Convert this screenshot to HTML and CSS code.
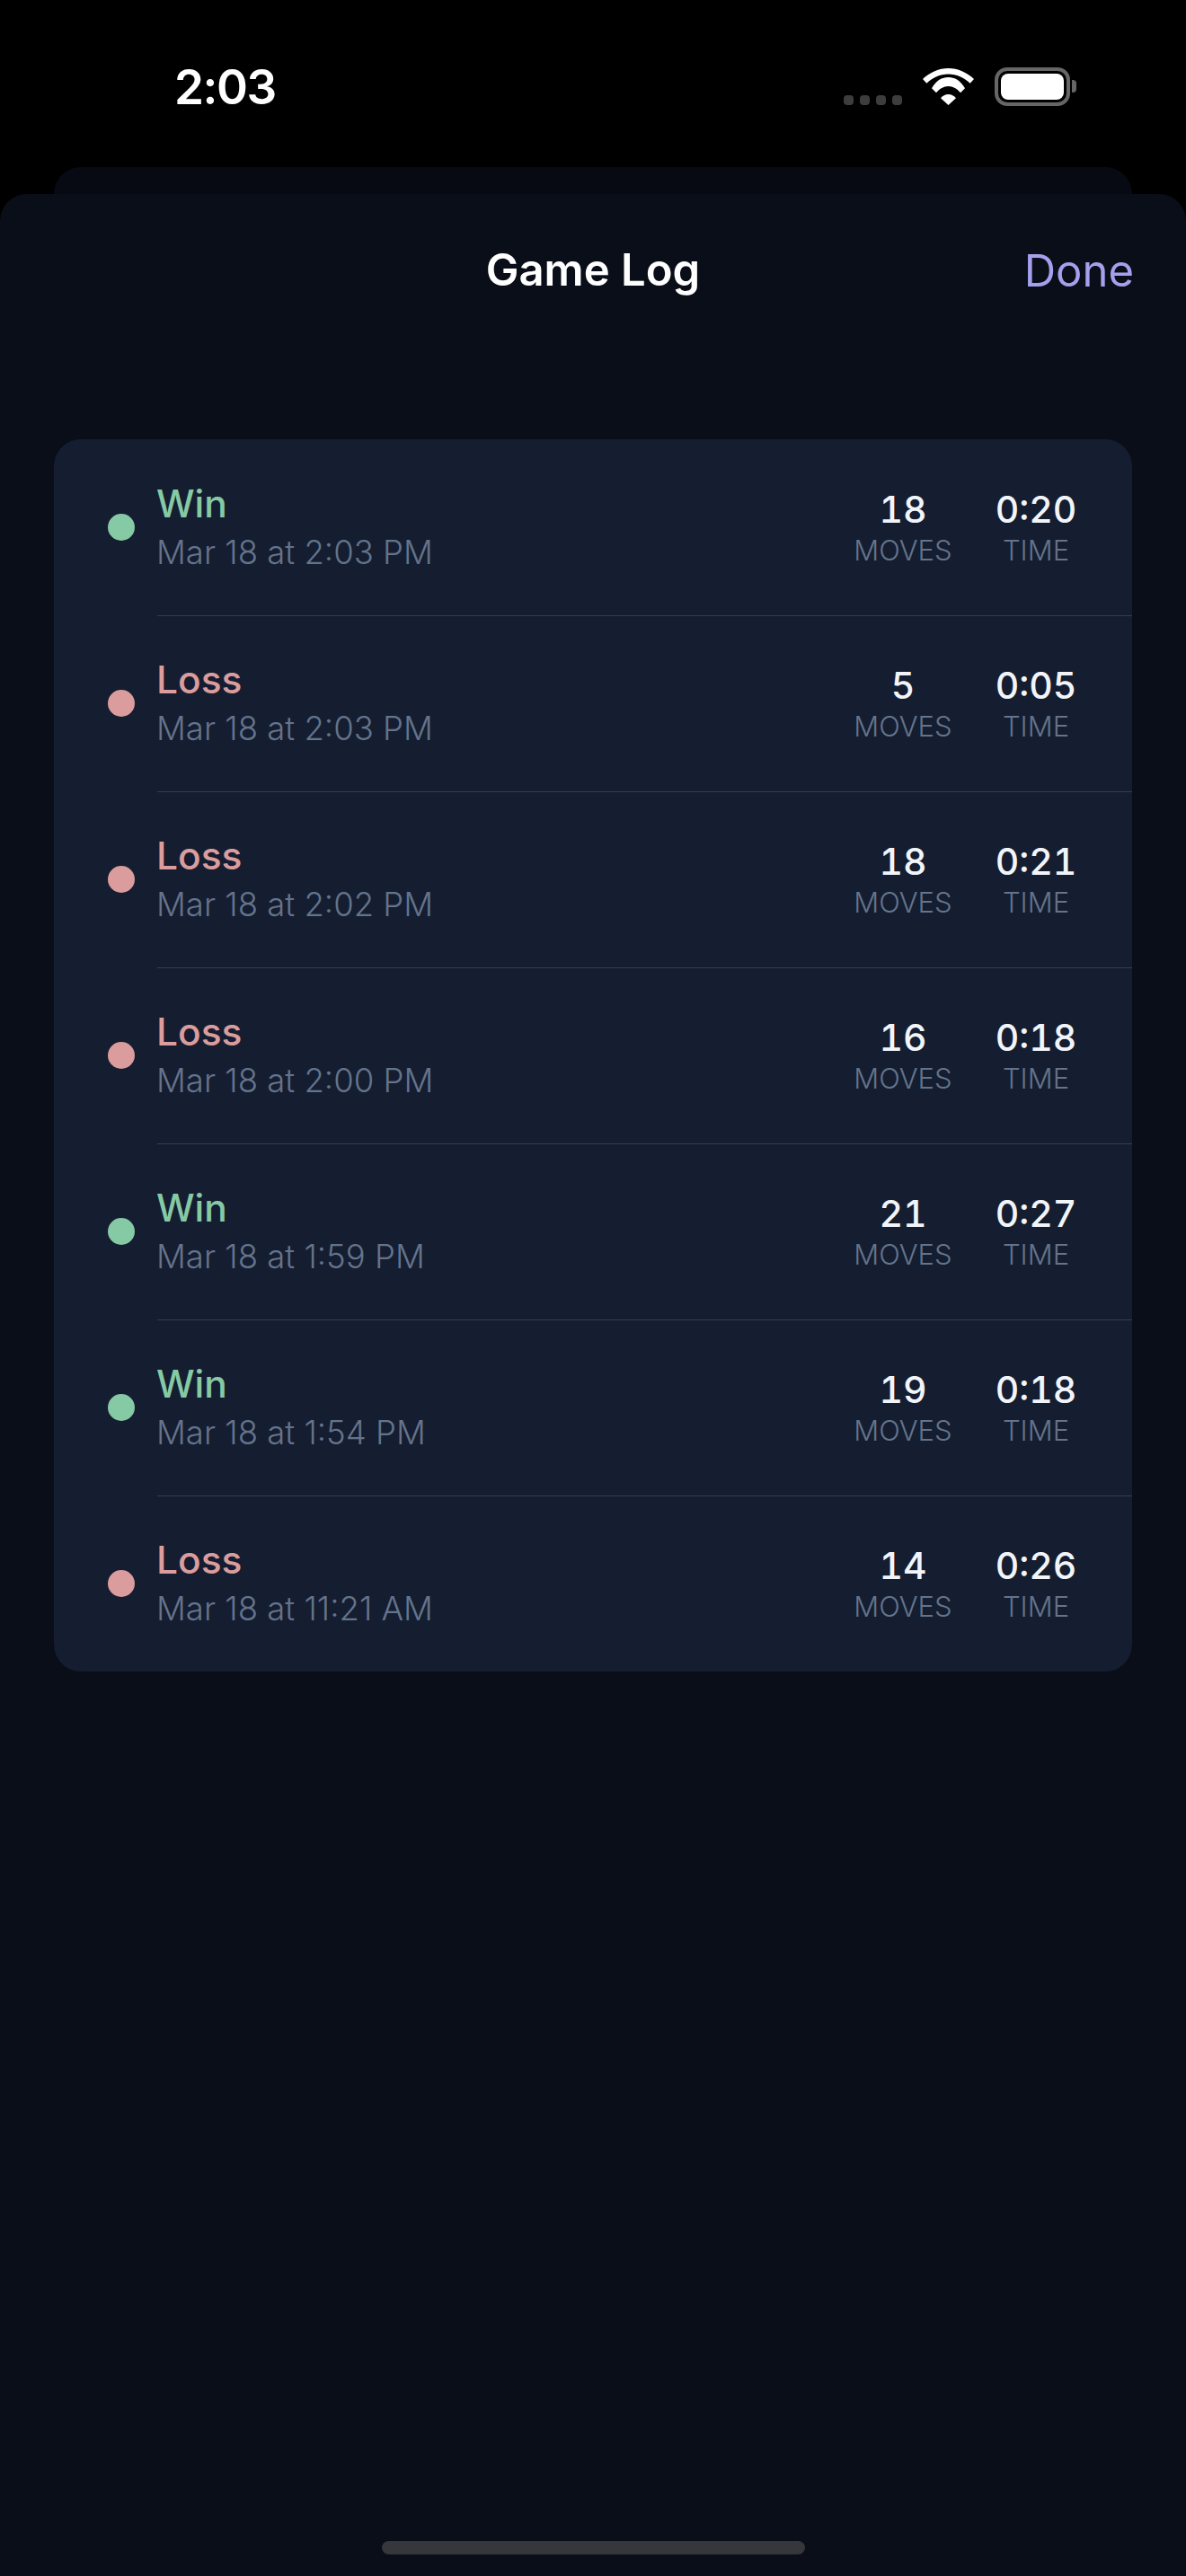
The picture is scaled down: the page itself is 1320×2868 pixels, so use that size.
FILE: index.html
```html
<!DOCTYPE html>
<html lang="en">
<head>
    <meta charset="UTF-8">
    <meta name="viewport" content="width=device-width, initial-scale=1.0">
    <title>Game Log</title>
    <link rel="stylesheet" href="styles.css">
</head>
<body>
    <div class="status-bar">
        <span class="clock">2:03</span>
        <div class="status-icons">
            <div class="signal"><span></span><span></span><span></span><span></span></div>
            <svg class="wifi" width="57" height="41" viewBox="0 0 57 41" fill="#fff">
                <path d="M0 12C8 4.500 18 0 28.500 0S49 4.500 57 12L52.700 16.700C46 10.300 37.700 6.500 28.500 6.500S11 10.300 4.300 16.700Z"></path>
                <path d="M10 22.300C15 13.500 21.500 10 28.500 10S42 13.500 47 22.300L42 27.300C38.300 23 33.700 20 28.500 20S18.700 23 15 27.300Z"></path>
                <path d="M20 33.300C22 30.700 25 29 28.500 29S35 30.700 37 33.300L28.500 41Z"></path>
            </svg>
            <div class="battery"><div class="battery-level"></div></div>
            <div class="battery-tip"></div>
        </div>
    </div>
    <div class="back-sheet"></div>
    <div class="sheet">
        <div class="sheet-header">
            <h1>Game Log</h1>
            <button class="done-btn">Done</button>
        </div>
        <div class="log-list">
            <div class="log-row">
                <span class="dot dot-win"></span>
                <div class="log-main"><div class="result result-win">Win</div><div class="when">Mar 18 at 2:03 PM</div></div>
                <div class="stat stat-moves"><div class="stat-value">18</div><div class="stat-label">MOVES</div></div>
                <div class="stat stat-time"><div class="stat-value">0:20</div><div class="stat-label">TIME</div></div>
            </div>
            <div class="log-row">
                <span class="dot dot-loss"></span>
                <div class="log-main"><div class="result result-loss">Loss</div><div class="when">Mar 18 at 2:03 PM</div></div>
                <div class="stat stat-moves"><div class="stat-value">5</div><div class="stat-label">MOVES</div></div>
                <div class="stat stat-time"><div class="stat-value">0:05</div><div class="stat-label">TIME</div></div>
            </div>
            <div class="log-row">
                <span class="dot dot-loss"></span>
                <div class="log-main"><div class="result result-loss">Loss</div><div class="when">Mar 18 at 2:02 PM</div></div>
                <div class="stat stat-moves"><div class="stat-value">18</div><div class="stat-label">MOVES</div></div>
                <div class="stat stat-time"><div class="stat-value">0:21</div><div class="stat-label">TIME</div></div>
            </div>
            <div class="log-row">
                <span class="dot dot-loss"></span>
                <div class="log-main"><div class="result result-loss">Loss</div><div class="when">Mar 18 at 2:00 PM</div></div>
                <div class="stat stat-moves"><div class="stat-value">16</div><div class="stat-label">MOVES</div></div>
                <div class="stat stat-time"><div class="stat-value">0:18</div><div class="stat-label">TIME</div></div>
            </div>
            <div class="log-row">
                <span class="dot dot-win"></span>
                <div class="log-main"><div class="result result-win">Win</div><div class="when">Mar 18 at 1:59 PM</div></div>
                <div class="stat stat-moves"><div class="stat-value">21</div><div class="stat-label">MOVES</div></div>
                <div class="stat stat-time"><div class="stat-value">0:27</div><div class="stat-label">TIME</div></div>
            </div>
            <div class="log-row">
                <span class="dot dot-win"></span>
                <div class="log-main"><div class="result result-win">Win</div><div class="when">Mar 18 at 1:54 PM</div></div>
                <div class="stat stat-moves"><div class="stat-value">19</div><div class="stat-label">MOVES</div></div>
                <div class="stat stat-time"><div class="stat-value">0:18</div><div class="stat-label">TIME</div></div>
            </div>
            <div class="log-row">
                <span class="dot dot-loss"></span>
                <div class="log-main"><div class="result result-loss">Loss</div><div class="when">Mar 18 at 11:21 AM</div></div>
                <div class="stat stat-moves"><div class="stat-value">14</div><div class="stat-label">MOVES</div></div>
                <div class="stat stat-time"><div class="stat-value">0:26</div><div class="stat-label">TIME</div></div>
            </div>
        </div>
        <div class="home-indicator"></div>
    </div>
</body>
</html>
```

FILE: styles.css
```css
:root {
    --sheet-color: #0a0e18;
    --back-color: #070a12;
    --card-color: #151d31;
    --line-color: #373d49;
    --win-color: #86c9a5;
    --loss-color: #da9c9d;
    --muted-color: #64748b;
    --value-color: #f1f5f9;
    --accent-color: #a5a0ee;
}
html, body {
    margin: 0;
    padding: 0;
}
body {
    width: 1320px;
    height: 2868px;
    overflow: hidden;
    background-color: #000;
    font-family: Inter, 'Liberation Sans', sans-serif;
    display: flex;
    flex-direction: column;
}
.status-bar {
    height: 186px;
    flex: none;
    padding: 0 122px 0 194px;
    box-sizing: border-box;
    display: flex;
    justify-content: space-between;
    align-items: flex-start;
}
.clock {
    margin-top: 64px;
    color: #fff;
    font-size: 53px;
    line-height: 66px;
    font-weight: 600;
    letter-spacing: -1.5px;
}
.status-icons {
    margin-top: 75px;
    display: flex;
    align-items: flex-start;
}
.signal {
    margin-top: 31px;
    margin-right: 23px;
    display: flex;
    gap: 7px;
}
.signal span {
    width: 11px;
    height: 11px;
    border-radius: 4px;
    background-color: #3d3d3d;
}
.wifi {
    margin-top: 1px;
    margin-right: 23px;
}
.battery {
    width: 84px;
    height: 43px;
    box-sizing: border-box;
    border: 4px solid #666;
    border-radius: 14px;
    padding: 3px;
}
.battery-level {
    height: 100%;
    background-color: #fff;
    border-radius: 8px;
}
.battery-tip {
    width: 5px;
    height: 14px;
    margin: 14px 0 0 2px;
    background-color: #666;
    border-radius: 0 4px 4px 0;
}
.back-sheet {
    height: 30px;
    flex: none;
    margin: 0 60px;
    background-color: var(--back-color);
    border-radius: 30px 30px 0 0;
}
.sheet {
    flex: 1;
    background-color: var(--sheet-color);
    border-radius: 30px 30px 0 0;
    padding: 0 60px;
    display: flex;
    flex-direction: column;
}
.sheet-header {
    height: 273px;
    flex: none;
    position: relative;
    text-align: center;
}
.sheet-header h1 {
    margin: 0;
    padding-top: 55px;
    color: #fff;
    font-size: 49px;
    line-height: 60px;
    font-weight: 600;
}
.done-btn {
    position: absolute;
    top: 56px;
    right: -2px;
    padding: 0;
    background: none;
    border: none;
    color: var(--accent-color);
    font-family: inherit;
    font-size: 49px;
    line-height: 60px;
}
.log-list {
    background-color: var(--card-color);
    border-radius: 30px;
    overflow: hidden;
}
.log-row {
    height: 196px;
    box-sizing: border-box;
    padding-left: 60px;
    display: flex;
    align-items: center;
    position: relative;
}
.log-row + .log-row::before {
    content: '';
    position: absolute;
    left: 115px;
    right: 0;
    top: 0;
    height: 1px;
    background-color: var(--line-color);
}
.dot {
    width: 30px;
    height: 30px;
    flex: none;
    border-radius: 50%;
    margin-right: 24px;
}
.dot-win {
    background-color: var(--win-color);
}
.dot-loss {
    background-color: var(--loss-color);
}
.log-main {
    flex: 1;
}
.result {
    font-size: 42.500px;
    line-height: 52px;
    font-weight: 500;
}
.result-win {
    color: var(--win-color);
}
.result-loss {
    color: var(--loss-color);
}
.when {
    margin-top: 4px;
    color: var(--muted-color);
    font-size: 36.500px;
    line-height: 48px;
    font-weight: 300;
}
.stat {
    text-align: center;
    flex: none;
    padding-top: 2px;
}
.stat-moves {
    width: 120px;
    margin-right: 38px;
}
.stat-time {
    width: 100px;
    margin-right: 57px;
}
.stat-value {
    color: var(--value-color);
    font-size: 41px;
    line-height: 48px;
    font-weight: 500;
    font-variant-numeric: tabular-nums;
}
.stat-label {
    margin-top: 2px;
    color: var(--muted-color);
    font-size: 31px;
    line-height: 40px;
    font-weight: 300;
}
.home-indicator {
    width: 471px;
    height: 15px;
    margin: auto auto 24px;
    background-color: #36373c;
    border-radius: 8px;
}
```
